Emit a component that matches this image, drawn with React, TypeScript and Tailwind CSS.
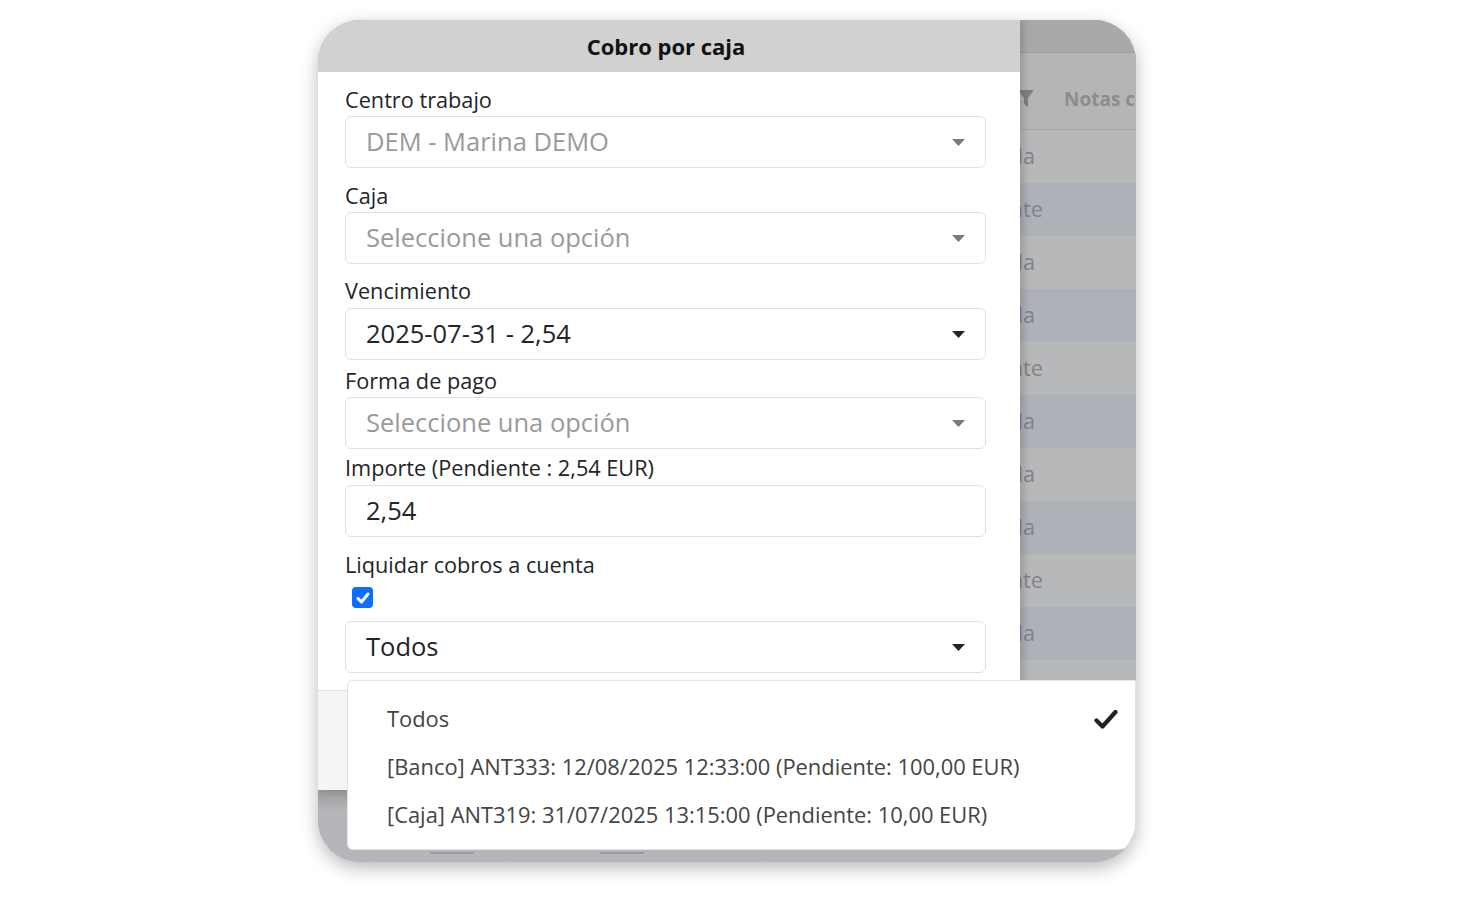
import React from 'react';

const font = { fontFamily: '"Open Sans", "Noto Sans", sans-serif' };

// small filled triangle used as the select caret
const Caret = ({ dark }: { dark?: boolean }) => (
    <svg width="13" height="7" viewBox="0 0 13 7" className="shrink-0">
        <path d="M0 0 H13 L6.5 7 Z" fill={dark ? '#212529' : '#7a7a7a'} />
    </svg>
);

interface SelectBoxProps {
    value: string;
    muted?: boolean;
    dark?: boolean;
    className?: string;
}

const SelectBox: React.FC<SelectBoxProps> = ({ value, muted, dark, className }) => (
    <div
        className={
            'h-[52px] w-[641px] flex items-center justify-between pl-[20px] pr-[20px] bg-white border border-[#dee2e6] rounded-[6px] ' +
            (className ?? '')
        }
    >
        <span className={'text-[25.5px] leading-none ' + (muted ? 'text-[#9a9a9a]' : 'text-[#212529]')}>{value}</span>
        <Caret dark={dark} />
    </div>
);

const Label = ({ children, className }: { children: React.ReactNode; className?: string }) => (
    <div className={'text-[21.7px] leading-[28px] text-[#212529] ' + (className ?? '')}>{children}</div>
);

const tableRows = [
    { tail: 'Pagada', tone: 'bg-[#b7b8b9]' },
    { tail: 'Pendiente', tone: 'bg-[#adb2b8]' },
    { tail: 'Pagada', tone: 'bg-[#b7b8b9]' },
    { tail: 'Pagada', tone: 'bg-[#adb2b8]' },
    { tail: 'Pendiente', tone: 'bg-[#b7b8b9]' },
    { tail: 'Pagada', tone: 'bg-[#adb2b8]' },
    { tail: 'Pagada', tone: 'bg-[#b7b8b9]' },
    { tail: 'Pagada', tone: 'bg-[#adb2b8]' },
    { tail: 'Pendiente', tone: 'bg-[#b7b8b9]' },
    { tail: 'Pagada', tone: 'bg-[#adb2b8]' },
];

const anticipos = [
    '[Banco] ANT333: 12/08/2025 12:33:00 (Pendiente: 100,00 EUR)',
    '[Caja] ANT319: 31/07/2025 13:15:00 (Pendiente: 10,00 EUR)',
];

export default function App() {
    return (
        <div className="min-h-screen bg-white pt-[20px] pl-[318px]" style={font}>
            <div className="relative w-[818px] h-[842px] rounded-[42px] overflow-hidden shadow-[0_6px_18px_rgba(0,0,0,0.28)] bg-[#b3b5b8] flex flex-col">
                <div className="flex h-[770px]">
                    {/* modal */}
                    <div className="w-[702px] flex flex-col shadow-[3px_0_8px_rgba(0,0,0,0.18)] z-10">
                        <div className="h-[52px] bg-[#d1d1d1] flex items-center justify-center">
                            <span className="text-[22px] font-bold text-[#111] pr-[6px]">Cobro por caja</span>
                        </div>
                        <div className="h-[618px] bg-white px-[27px] pt-[14px]">
                            <Label>Centro trabajo</Label>
                            <SelectBox value="DEM - Marina DEMO" muted className="mt-[2px]" />

                            <Label className="mt-[14px]">Caja</Label>
                            <SelectBox value="Seleccione una opción" muted className="mt-[2px]" />

                            <Label className="mt-[13px]">Vencimiento</Label>
                            <SelectBox value="2025-07-31 - 2,54" dark className="mt-[3px]" />

                            <Label className="mt-[7px]">Forma de pago</Label>
                            <SelectBox value="Seleccione una opción" muted className="mt-[2px]" />

                            <Label className="mt-[5px]">Importe (Pendiente : 2,54 EUR)</Label>
                            <div className="mt-[3px] h-[52px] w-[641px] flex items-center pl-[20px] bg-white border border-[#dee2e6] rounded-[6px]">
                                <span className="text-[25.5px] leading-none text-[#212529]">2,54</span>
                            </div>

                            <Label className="mt-[14px]">Liquidar cobros a cuenta</Label>
                            <div className="mt-[8px] ml-[7px] w-[21px] h-[21px] rounded-[4px] bg-[#0d6efd] flex items-center justify-center">
                                <svg width="16" height="16" viewBox="0 0 16 16">
                                    <path d="M3 8.5 L6.5 12 L13 4" fill="none" stroke="#fff" strokeWidth="3" strokeLinecap="round" strokeLinejoin="round" />
                                </svg>
                            </div>
                            <SelectBox value="Todos" dark className="mt-[13px]" />
                        </div>
                        <div className="h-[100px] bg-[#f5f5f5] border-t border-[#e6e6e6]" />
                    </div>

                    {/* dimmed table behind the modal */}
                    <div className="flex-1 flex flex-col bg-[#b3b3b3]">
                        <div className="h-[33px] bg-[#a9a9a9] border-b border-[#a0a0a0]" />
                        <div className="h-[77px] bg-[#b5b5b5] flex items-start pt-[33px] gap-[30px] border-b border-[#aaaaaa]">
                            <svg width="16" height="17" viewBox="0 0 16 17" className="-ml-[2px] mt-[4px]">
                                <path d="M0 0 H16 L10 8 V17 L6 14 V8 Z" fill="#7d7f81" />
                            </svg>
                            <span className="text-[19px] leading-[26px] font-bold text-[#8a8c8e] whitespace-nowrap">Notas c</span>
                        </div>
                        {tableRows.map((r, i) => (
                            <div key={i} className={'h-[53px] flex items-center ' + r.tone}>
                                <div
                                    className={
                                        'overflow-hidden flex justify-end ' +
                                        (r.tail === 'Pendiente' ? 'w-[23px]' : 'w-[15px]')
                                    }
                                >
                                    <span className="shrink-0 whitespace-nowrap text-[21.7px] text-[#818487]">{r.tail}</span>
                                </div>
                            </div>
                        ))}
                        <div className="flex-1 bg-[#b7b8b9]" />
                    </div>
                </div>

                {/* strip below the modal */}
                <div className="flex-1 bg-gradient-to-b from-[#9c9c9c] to-[#b4b6b9] to-30% flex items-end pb-[8px]">
                    <div className="ml-[112px] w-[44px] h-[2px] bg-[#9a9a9a]" />
                    <div className="ml-[126px] w-[44px] h-[2px] bg-[#9a9a9a]" />
                </div>

                {/* open dropdown of the last select */}
                <div className="absolute left-[29px] top-[660px] right-0 h-[170px] bg-white border border-[#e3e3e3] rounded-l-[6px] rounded-br-[18px] pt-[14px] z-20">
                    <div className="h-[48px] flex items-center justify-between pl-[39px] pr-[17px]">
                        <span className="text-[21.9px] text-[#444]">Todos</span>
                        <svg width="24" height="21" viewBox="0 0 24 21">
                            <path d="M2.5 11.5 L8.5 17.5 L21.5 3" fill="none" stroke="#222" strokeWidth="4.2" strokeLinecap="round" strokeLinejoin="round" />
                        </svg>
                    </div>
                    {anticipos.map((a) => (
                        <div key={a} className="h-[48px] flex items-center pl-[39px]">
                            <span className="text-[21.9px] text-[#444] whitespace-nowrap">{a}</span>
                        </div>
                    ))}
                </div>
            </div>
        </div>
    );
}
